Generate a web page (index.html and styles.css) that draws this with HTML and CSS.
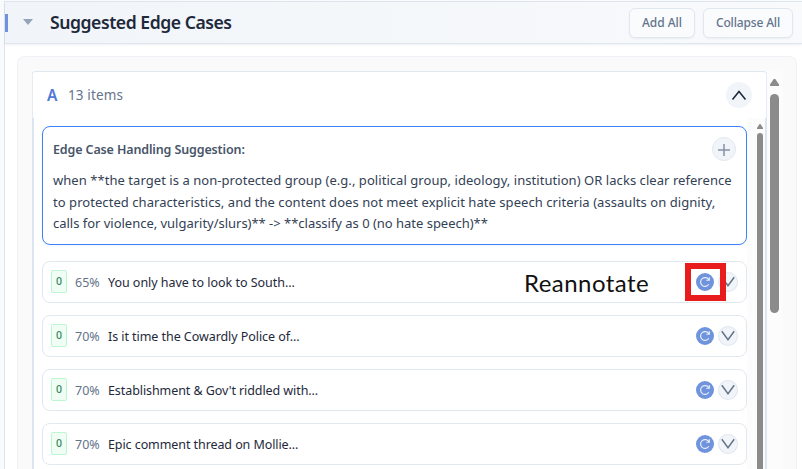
FILE: index.html
```
<!DOCTYPE html>
<html lang="en">
<head>
<meta charset="utf-8">
<title>Suggested Edge Cases</title>
<link rel="stylesheet" href="styles.css">
</head>
<body>
<svg width="0" height="0" class="defs">
  <symbol id="refresh" viewBox="0 0 18 18"><path d="M12.8 11.2A4.4 4.4 0 1 1 12.8 6.8M13.3 4.3V7.2H10.3" fill="none" stroke="#e8eefb" stroke-width="1.15"/></symbol>
  <symbol id="down" viewBox="0 0 20 20"><path d="M3.8 5.3L10 13.8L16.2 5.3" fill="none" stroke="#64748b" stroke-width="1.5"/></symbol>
</svg>
<main class="section">
  <header class="bar">
    <i class="accent"></i>
    <svg class="caret" width="10" height="6" viewBox="0 0 10 6"><path d="M0 0H10L5 6Z" fill="#94a3b8"/></svg>
    <h1><span class="t-title">Suggested Edge Cases</span></h1>
    <button class="btn add"><span class="t-add">Add All</span></button>
    <button class="btn collapse"><span class="t-collapse">Collapse All</span></button>
  </header>
  <div class="panel">
    <section class="group">
      <div class="group-head">
        <b>A</b><span class="count">13 items</span>
        <span class="toggle"><svg width="26" height="26" viewBox="0 0 26 26"><path d="M6.5 17.5L13 9.5L19.5 17.5" fill="none" stroke="#1e293b" stroke-width="1.6"/></svg></span>
      </div>
      <div class="group-body">
        <div class="list">
          <article class="suggestion">
            <div class="suggestion-head"><strong><span class="t-label">Edge Case Handling Suggestion:</span></strong>
              <span class="plus"><svg width="22" height="22" viewBox="0 0 22 22"><path d="M5 12H17M11 6V18" stroke="#8492a8" stroke-width="1.5"/></svg></span></div>
            <p><span class="l1">when **the target is a non-protected group (e.g., political group, ideology, institution) OR lacks clear reference</span><br><span class="l2">to protected characteristics, and the content does not meet explicit hate speech criteria (assaults on dignity,</span><br><span class="l3">calls for violence, vulgarity/slurs)** -&gt; **classify as 0 (no hate speech)**</span></p>
          </article>
          <article class="row"><span class="tag">0</span><span class="pct">65%</span><span class="text r1">You only have to look to South...</span><span class="re"><svg width="18" height="18"><use href="#refresh"/></svg></span><span class="down"><svg width="20" height="20"><use href="#down"/></svg></span><span class="note">Reannotate</span><i class="mark"></i></article>
          <article class="row"><span class="tag">0</span><span class="pct">70%</span><span class="text r2">Is it time the Cowardly Police of...</span><span class="re"><svg width="18" height="18"><use href="#refresh"/></svg></span><span class="down"><svg width="20" height="20"><use href="#down"/></svg></span></article>
          <article class="row"><span class="tag">0</span><span class="pct">70%</span><span class="text r3">Establishment &amp; Gov't riddled with...</span><span class="re"><svg width="18" height="18"><use href="#refresh"/></svg></span><span class="down"><svg width="20" height="20"><use href="#down"/></svg></span></article>
          <article class="row"><span class="tag">0</span><span class="pct">70%</span><span class="text r4">Epic comment thread on Mollie...</span><span class="re"><svg width="18" height="18"><use href="#refresh"/></svg></span><span class="down"><svg width="20" height="20"><use href="#down"/></svg></span></article>
        </div>
        <div class="scroll inner"><svg width="6" height="5" viewBox="0 0 6 5"><path d="M2.5 0H3.5L6 4V5H0V4Z" fill="#8b8b8b"/></svg><i></i></div>
      </div>
    </section>
    <div class="scroll outer"><svg width="9" height="7" viewBox="0 0 9 7"><path d="M3.7 0H5.3L9 5.5V7H0V5.5Z" fill="#8b8b8b"/></svg><i></i></div>
  </div>
</main>
</body>
</html>
```
FILE: styles.css
```
* { box-sizing: border-box; }
body { margin: 0; width: 802px; height: 469px; overflow: hidden; background: #f8fafc; font-family: "Noto Sans", sans-serif; color: #334155; }
.defs { position: absolute; }
svg { display: block; flex: none; }
span { white-space: nowrap; }
.section { margin: 1px 0 0 4px; height: 468px; border-left: 1px solid #dce5ef; border-top: 1px solid #dfe6ef; background: #fff; }
.bar { height: 42px; display: flex; align-items: center; background: linear-gradient(90deg, #f1f5f9, #f8fafc); border-bottom: 1px solid #dfe6ef; box-shadow: 0 1px 2px #0f172a12; padding-right: 9px; }
.accent { width: 3px; height: 18px; background: #6f93dc; }
.caret { margin: 0 17px 2px 15px; }
h1 { margin: 0 auto 1px 0; font-size: 17.6px; font-weight: 600; line-height: 24px; color: #1e293b; }
.t-title { letter-spacing: -.46px; }
.btn { height: 30px; padding: 0; border: 1px solid #dfe7f1; border-radius: 6px; background: #f9fbfd; box-shadow: 0 1px 2px #0f172a0d; font: 500 12px "Noto Sans", sans-serif; color: #64748b; }
.add { width: 66px; margin-right: 8px; }
.collapse { width: 90px; }
.t-collapse { letter-spacing: -.15px; }
.panel { margin: 12px 5px 0 12px; height: 430px; border: 1px solid #eef1f5; border-bottom: 0; border-radius: 8px 8px 0 0; background: #fafafa; display: flex; padding: 14px 0 0 14px; }
.group { width: 735px; height: 400px; border-top: 1px solid #dfe7f1; border-radius: 4px 4px 0 0; background: #fff; }
.group-head { height: 46px; display: flex; align-items: center; padding: 0 14px 0 14px; border: solid #e6ecf4; border-width: 0 1px; font-size: 13.5px; color: #64748b; }
.group-head b { font-weight: 600; font-size: 15.5px; color: #5179d6; width: 20px; }
.count { letter-spacing: .12px; padding-left: 1px; }
.toggle { margin-left: auto; width: 26px; height: 26px; border-radius: 50%; background: #f1f5f9; }
.group-body { height: 361px; border: solid #dce5f2; border-width: 0 2px; display: flex; padding-left: 8px; }
.list { width: 705px; padding-top: 8px; }
.suggestion { height: 119px; border: 1.5px solid #3b82f6; border-radius: 8px; padding: 10px; background: #fff; box-shadow: 0 1px 3px #3b82f612; }
.suggestion-head { display: flex; justify-content: space-between; height: 25px; font-size: 12.5px; line-height: 25px; color: #475569; }
.suggestion-head strong { font-weight: 600; }
.t-label { letter-spacing: -.13px; }
.plus { width: 24px; height: 24px; border: 1px solid #e2e8f0; border-radius: 50%; background: #f1f5f9; }
p { margin: 8px 0 0; font-size: 13px; line-height: 21.6px; }
.l1 { letter-spacing: .053px; }
.l2 { letter-spacing: .055px; }
.l3 { letter-spacing: -.02px; }
.row { position: relative; height: 42px; margin-top: 12px; border: 1px solid #e2e8f0; border-radius: 8px; background: #fff; display: flex; align-items: center; padding: 0 8px; }
.suggestion + .row { margin-top: 16px; }
.tag { width: 16px; height: 23px; margin-bottom: 2px; border: 1px solid #bbf7d0; border-radius: 2px; background: #f0fdf4; color: #2f855a; font-size: 10.5px; font-weight: 500; line-height: 20px; text-align: center; }
.pct { width: 33px; padding-left: 8px; font-size: 12.5px; color: #64748b; }
.text { margin-right: auto; padding-left: 8px; font-size: 12.5px; color: #1e293b; }
.r1 { letter-spacing: -.03px; }
.r2 { letter-spacing: -.06px; }
.r3, .r4 { letter-spacing: -.08px; }
.re, .down { border-radius: 50%; margin-bottom: 1px; }
.re { width: 18px; height: 18px; margin-right: 4px; background: #6f93dc; }
.down { width: 20px; height: 20px; background: #f1f5f9; box-shadow: inset 0 0 0 1px #e2e8f0; }
.note { position: absolute; left: 481px; top: 5px; font: 24px/32px Lato, sans-serif; letter-spacing: .45px; color: #111; }
.mark { position: absolute; left: 642px; top: 1px; width: 41px; height: 38px; border: 6px solid #e81b1d; }
.scroll { display: flex; flex-direction: column; align-items: center; background: #fcfcfc; }
.scroll i { background: #8b8b8b; border-radius: 5px 5px 0 0; }
.inner { width: 18px; padding: 6px 0 0 10px; align-items: flex-start; }
.inner i { width: 6px; height: 345px; margin-top: 4px; }
.outer { width: 16px; height: 400px; padding: 8px 1px 0 0; }
.outer i { width: 9px; height: 219px; border-radius: 5px; margin-top: 8px; }
```
